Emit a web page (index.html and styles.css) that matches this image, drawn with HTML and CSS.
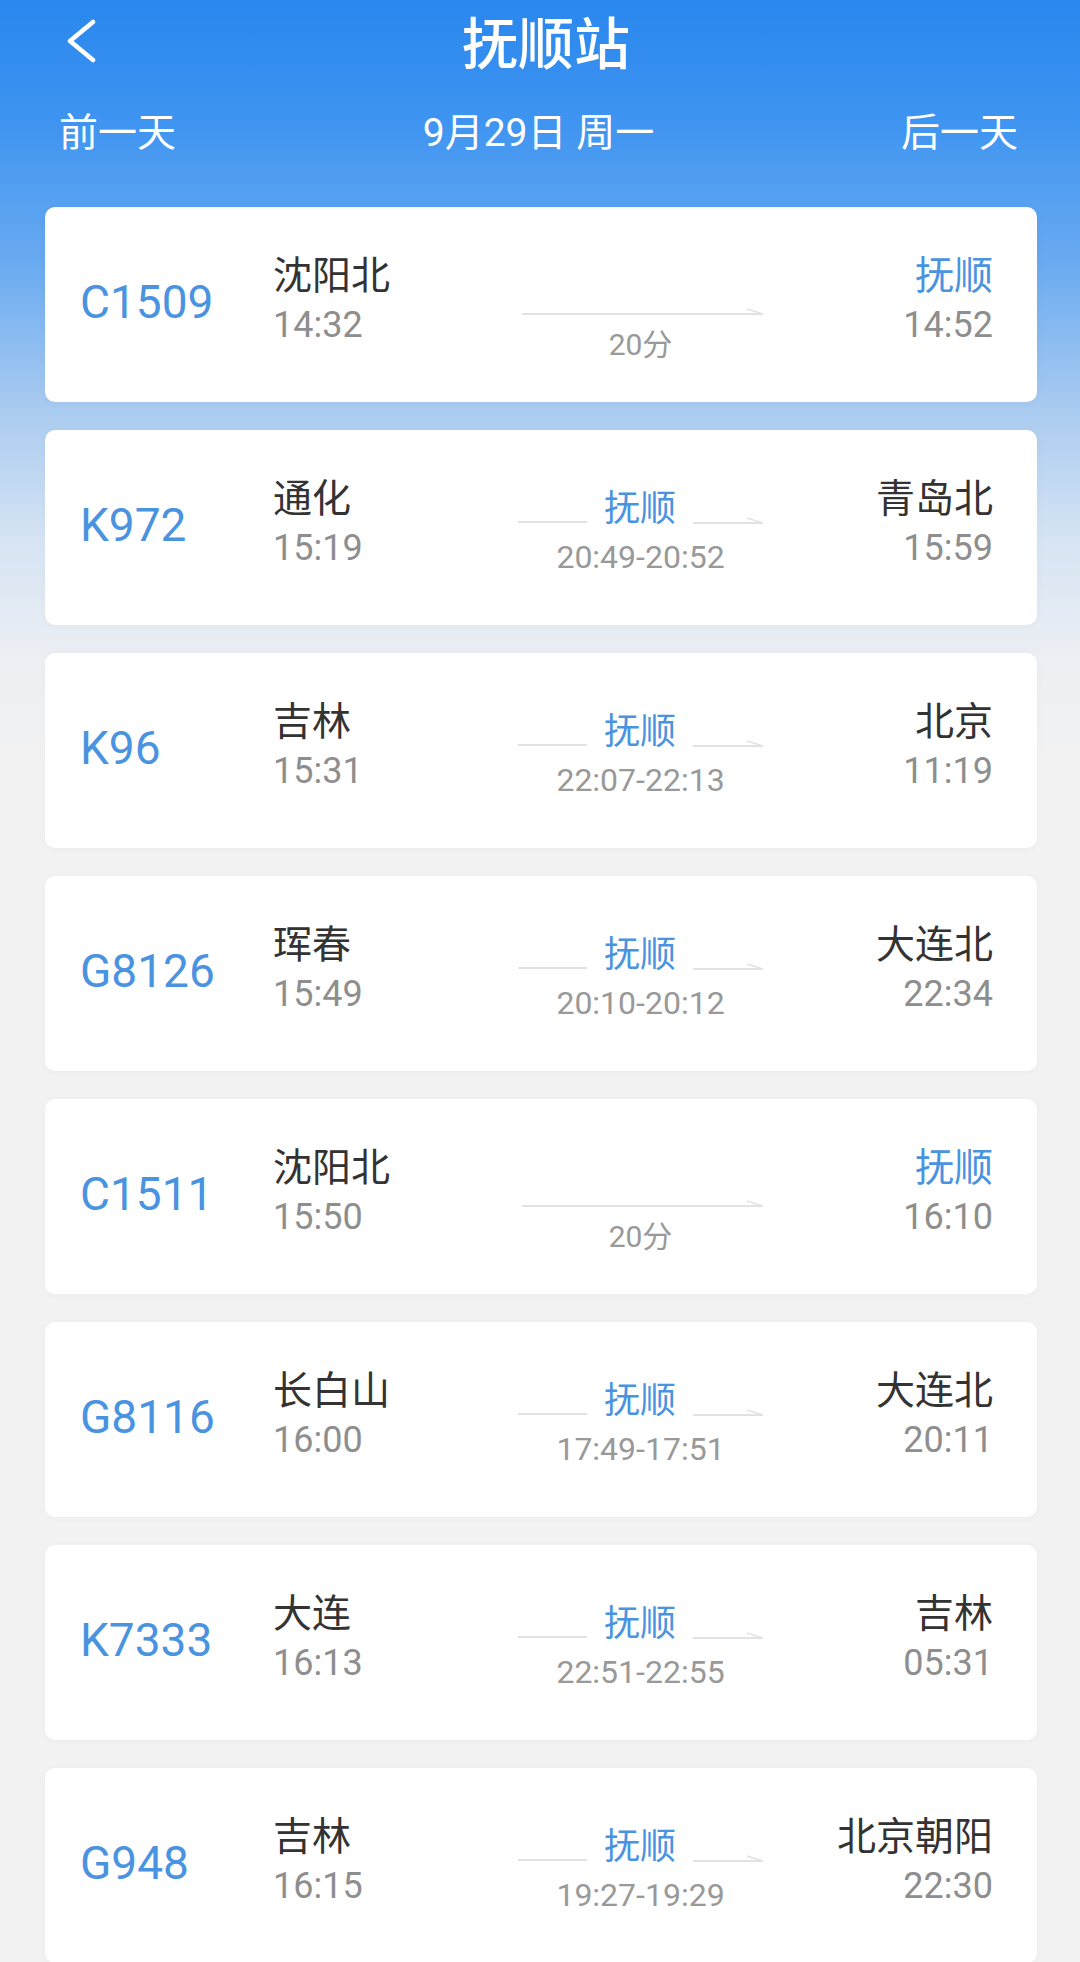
FILE: index.html
```html
<!DOCTYPE html>
<html lang="zh-CN">
<head>
  <meta charset="UTF-8"/>
  <meta name="viewport" content="width=device-width, initial-scale=1.0"/>
  <title>抚顺站</title>
  <link rel="stylesheet" href="styles.css">
</head>
<body>

  <!-- Top bar -->
  <div class="topbar">
    <div class="back">
      <svg width="34" height="46" viewBox="0 0 34 46">
        <polyline points="27,5 4,24 27,43" fill="none" stroke="#fff" stroke-width="4.5" stroke-linecap="round" stroke-linejoin="round"/>
      </svg>
    </div>
    <h1 class="title">抚顺站</h1>
    <div class="spacer"></div>
  </div>

  <div class="datebar">
    <span>前一天</span>
    <span class="date">9月29日 周一</span>
    <span>后一天</span>
  </div>

  <div class="list">

    <div class="card">
      <div class="train">C1509</div>
      <div class="stop">
        <div class="name">沈阳北</div>
        <div class="time">14:32</div>
      </div>
      <div class="mid direct">
        <svg class="arrow" width="241" height="8" viewBox="0 0 241 8">
          <path d="M0 7 H241" stroke="#e2e2e2" stroke-width="2"/>
          <path d="M241 7 L225 2" stroke="#e2e2e2" stroke-width="1.5"/>
        </svg>
        <div class="dur">20分</div>
      </div>
      <div class="stop end">
        <div class="name here">抚顺</div>
        <div class="time">14:52</div>
      </div>
    </div>

    <div class="card">
      <div class="train">K972</div>
      <div class="stop">
        <div class="name">通化</div>
        <div class="time">15:19</div>
      </div>
      <div class="mid">
        <div class="via">
          <span class="seg"></span>
          <span class="via-name">抚顺</span>
          <svg class="seg-end" width="70" height="8" viewBox="0 0 70 8">
            <path d="M0 7 H70" stroke="#e2e2e2" stroke-width="2"/>
            <path d="M70 7 L54 2" stroke="#e2e2e2" stroke-width="1.5"/>
          </svg>
        </div>
        <div class="via-time">20:49-20:52</div>
      </div>
      <div class="stop end">
        <div class="name">青岛北</div>
        <div class="time">15:59</div>
      </div>
    </div>

    <div class="card">
      <div class="train">K96</div>
      <div class="stop">
        <div class="name">吉林</div>
        <div class="time">15:31</div>
      </div>
      <div class="mid">
        <div class="via">
          <span class="seg"></span>
          <span class="via-name">抚顺</span>
          <svg class="seg-end" width="70" height="8" viewBox="0 0 70 8">
            <path d="M0 7 H70" stroke="#e2e2e2" stroke-width="2"/>
            <path d="M70 7 L54 2" stroke="#e2e2e2" stroke-width="1.5"/>
          </svg>
        </div>
        <div class="via-time">22:07-22:13</div>
      </div>
      <div class="stop end">
        <div class="name">北京</div>
        <div class="time">11:19</div>
      </div>
    </div>

    <div class="card">
      <div class="train">G8126</div>
      <div class="stop">
        <div class="name">珲春</div>
        <div class="time">15:49</div>
      </div>
      <div class="mid">
        <div class="via">
          <span class="seg"></span>
          <span class="via-name">抚顺</span>
          <svg class="seg-end" width="70" height="8" viewBox="0 0 70 8">
            <path d="M0 7 H70" stroke="#e2e2e2" stroke-width="2"/>
            <path d="M70 7 L54 2" stroke="#e2e2e2" stroke-width="1.5"/>
          </svg>
        </div>
        <div class="via-time">20:10-20:12</div>
      </div>
      <div class="stop end">
        <div class="name">大连北</div>
        <div class="time">22:34</div>
      </div>
    </div>

    <div class="card">
      <div class="train">C1511</div>
      <div class="stop">
        <div class="name">沈阳北</div>
        <div class="time">15:50</div>
      </div>
      <div class="mid direct">
        <svg class="arrow" width="241" height="8" viewBox="0 0 241 8">
          <path d="M0 7 H241" stroke="#e2e2e2" stroke-width="2"/>
          <path d="M241 7 L225 2" stroke="#e2e2e2" stroke-width="1.5"/>
        </svg>
        <div class="dur">20分</div>
      </div>
      <div class="stop end">
        <div class="name here">抚顺</div>
        <div class="time">16:10</div>
      </div>
    </div>

    <div class="card">
      <div class="train">G8116</div>
      <div class="stop">
        <div class="name">长白山</div>
        <div class="time">16:00</div>
      </div>
      <div class="mid">
        <div class="via">
          <span class="seg"></span>
          <span class="via-name">抚顺</span>
          <svg class="seg-end" width="70" height="8" viewBox="0 0 70 8">
            <path d="M0 7 H70" stroke="#e2e2e2" stroke-width="2"/>
            <path d="M70 7 L54 2" stroke="#e2e2e2" stroke-width="1.5"/>
          </svg>
        </div>
        <div class="via-time">17:49-17:51</div>
      </div>
      <div class="stop end">
        <div class="name">大连北</div>
        <div class="time">20:11</div>
      </div>
    </div>

    <div class="card">
      <div class="train">K7333</div>
      <div class="stop">
        <div class="name">大连</div>
        <div class="time">16:13</div>
      </div>
      <div class="mid">
        <div class="via">
          <span class="seg"></span>
          <span class="via-name">抚顺</span>
          <svg class="seg-end" width="70" height="8" viewBox="0 0 70 8">
            <path d="M0 7 H70" stroke="#e2e2e2" stroke-width="2"/>
            <path d="M70 7 L54 2" stroke="#e2e2e2" stroke-width="1.5"/>
          </svg>
        </div>
        <div class="via-time">22:51-22:55</div>
      </div>
      <div class="stop end">
        <div class="name">吉林</div>
        <div class="time">05:31</div>
      </div>
    </div>

    <div class="card">
      <div class="train">G948</div>
      <div class="stop">
        <div class="name">吉林</div>
        <div class="time">16:15</div>
      </div>
      <div class="mid">
        <div class="via">
          <span class="seg"></span>
          <span class="via-name">抚顺</span>
          <svg class="seg-end" width="70" height="8" viewBox="0 0 70 8">
            <path d="M0 7 H70" stroke="#e2e2e2" stroke-width="2"/>
            <path d="M70 7 L54 2" stroke="#e2e2e2" stroke-width="1.5"/>
          </svg>
        </div>
        <div class="via-time">19:27-19:29</div>
      </div>
      <div class="stop end">
        <div class="name">北京朝阳</div>
        <div class="time">22:30</div>
      </div>
    </div>

  </div>

</body>
</html>
```

FILE: styles.css
```css
* { box-sizing: border-box; margin: 0; padding: 0; }
html, body { height: 100%; overflow: hidden; }

body {
  font-family: "Noto Sans CJK SC", sans-serif;
  background: linear-gradient(180deg,
    #2987ee 0,
    #3e94f0 120px,
    #68aaf0 260px,
    #a6c9f0 400px,
    #d6e4f3 540px,
    #eceff3 660px,
    #f2f2f2 760px,
    #f2f2f2 100%);
}

/* header */
.topbar {
  display: flex;
  align-items: center;
  height: 80px;
}

.back {
  width: 120px;
  padding-left: 66px;
  display: flex;
  align-items: center;
}

.title {
  flex: 1;
  text-align: center;
  color: #fff;
  font-size: 56px;
  line-height: 80px;
  font-weight: 500;
}

.spacer { width: 108px; }

.datebar {
  display: flex;
  justify-content: space-between;
  align-items: center;
  height: 98px;
  padding: 0 62px 0 59px;
  color: #fff;
  font-size: 39px;
}

.date { font-family: Roboto, "Noto Sans CJK SC", sans-serif; }

/* train list */
.list {
  padding: 29px 43px 0 45px;
}

.card {
  display: flex;
  align-items: flex-start;
  height: 195px;
  padding: 40px 44px 40px 35px;
  margin-bottom: 28px;
  background: #fff;
  border-radius: 10px;
  box-shadow: 0 1px 8px rgba(0, 0, 0, 0.03);
}

.train {
  width: 193px;
  align-self: center;
  margin-bottom: 5px;
  font-family: Roboto, sans-serif;
  font-size: 46px;
  line-height: 1;
  color: #4a93e0;
}

.stop { width: 245px; }
.stop.end { flex: 1; text-align: right; }

.name {
  font-size: 39px;
  line-height: 50px;
  color: #333;
}
.name.here { color: #4a93e0; }

.time {
  font-family: Roboto, sans-serif;
  font-size: 36px;
  line-height: 56px;
  color: #8e8e8e;
}

/* middle column */
.mid {
  width: 245px;
  padding-top: 12px;
}

.via {
  display: flex;
  justify-content: space-between;
  height: 46px;
}

.seg {
  width: 69px;
  height: 2px;
  align-self: flex-end;
  margin-bottom: 5px;
  background: #e2e2e2;
}

.seg-end {
  align-self: flex-end;
  margin-bottom: 4px;
}

.via-name {
  font-size: 36px;
  line-height: 46px;
  color: #4a93e0;
}

.via-time {
  margin-top: 8px;
  text-align: center;
  font-family: Roboto, sans-serif;
  font-size: 32px;
  line-height: 42px;
  color: #999;
}

.mid.direct { padding-top: 60px; }

.arrow {
  display: block;
  margin-left: 4px;
}

.dur {
  margin-top: 10px;
  text-align: center;
  font-family: Roboto, "Noto Sans CJK SC", sans-serif;
  font-size: 30px;
  line-height: 40px;
  color: #999;
}
```
